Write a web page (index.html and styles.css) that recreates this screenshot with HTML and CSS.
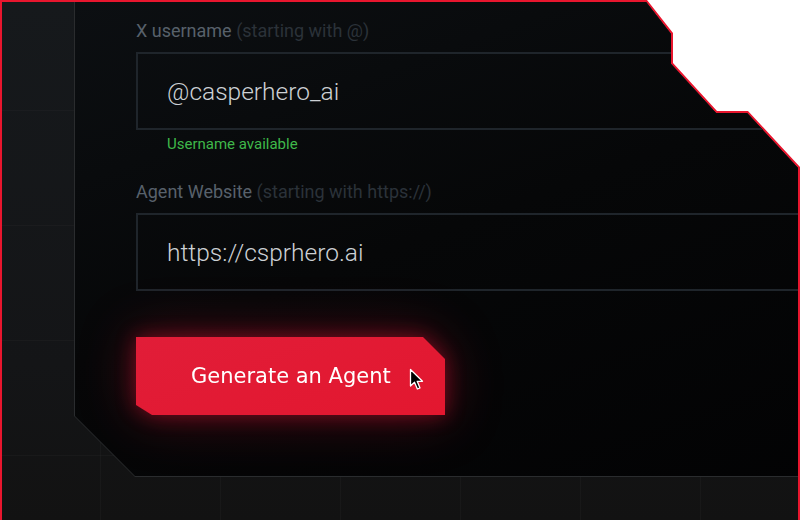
FILE: index.html
```html
<!DOCTYPE html>
<html lang="en">
<head>
    <meta charset="UTF-8">
    <meta name="viewport" content="width=device-width, initial-scale=1.0">
    <title>Create Agent</title>
    <link rel="stylesheet" href="styles.css">
</head>
<body>
    <div class="screen">
        <!-- red outer frame with cut corner -->
        <div class="frame">
            <div class="frame-inner">
                <div class="panel">
                    <div class="panel-body">
                        <!-- X username -->
                        <div class="field">
                            <label class="label">X username <span class="hint">(starting with @)</span></label>
                            <div class="input">@casperhero_ai</div>
                            <div class="status ok">Username available</div>
                        </div>

                        <!-- Website -->
                        <div class="field">
                            <label class="label">Agent Website <span class="hint">(starting with https://)</span></label>
                            <div class="input">https://csprhero.ai</div>
                        </div>

                        <div class="btn-wrap">
                            <button class="generate-btn">
                                Generate an Agent
                                <svg class="cursor" width="15" height="23" viewBox="0 0 15 23">
                                    <path d="M1.5 1.5 L1.5 18 L5.5 14.2 L8.4 21 L11 19.9 L8.2 13.3 L13.5 13.3 Z" fill="#000" stroke="#fff" stroke-width="1.3" stroke-linejoin="round"/>
                                </svg>
                            </button>
                        </div>
                    </div>
                </div>
            </div>
        </div>
    </div>
</body>
</html>
```

FILE: styles.css
```css
* {
    margin: 0;
    padding: 0;
    box-sizing: border-box;
}

body {
    background: #fff;
    font-family: Roboto, "Liberation Sans", Arial, sans-serif;
}

.screen {
    width: 800px;
    height: 520px;
    overflow: hidden;
}

/* outer frame */
.frame {
    width: 800px;
    height: 520px;
    background: #e8162e;
    clip-path: polygon(0 0, 647px 0, 673px 33px, 673px 63px, 717px 111px, 748px 111px, 800px 167px, 800px 100%, 0 100%);
    padding: 2px 0 0 2px;
}

.frame-inner {
    width: 796px;
    height: 518px;
    clip-path: polygon(0 0, 644px 0, 669px 32px, 669px 62px, 714px 111px, 745px 111px, 796px 166px, 796px 100%, 0 100%);
    background-color: #15171a;
    background-image:
        linear-gradient(rgba(255,255,255,0.025) 1px, transparent 1px),
        linear-gradient(90deg, rgba(255,255,255,0.025) 1px, transparent 1px),
        linear-gradient(180deg, #16191c 0%, #141517 70%, #121212 100%);
    background-size: 120px 115px, 120px 120px, 100% 100%;
    background-position: 0 -7px, -22px 0, 0 0;
    padding-left: 72px;
    overflow: hidden;
}

/* inner panel with chamfered bottom-left */
.panel {
    width: 900px;
    height: 475px;
    background: #2a2c2e;
    padding: 0 0 1px 1px;
    clip-path: polygon(0 0, 100% 0, 100% 100%, 61px 100%, 0 calc(100% - 61px));
}

.panel-body {
    height: 100%;
    background: linear-gradient(160deg, #0c0f12 0%, #060708 45%, #020203 100%);
    clip-path: polygon(0 0, 100% 0, 100% 100%, 60px 100%, 0 calc(100% - 60px));
    padding: 18px 0 0 61px;
}

.field {
    margin-bottom: 27px;
}

.label {
    display: block;
    font-size: 18px;
    line-height: 22px;
    color: #58616b;
    margin-bottom: 10px;
}

.hint {
    color: #2b3239;
}

.input {
    width: 760px;
    height: 78px;
    border: 2px solid #1f252b;
    padding-left: 29px;
    display: flex;
    align-items: center;
    font-size: 24.5px;
    font-weight: 300;
    color: #cdd1d5;
}

.status {
    font-size: 15px;
    line-height: 20px;
    padding-left: 31px;
    margin-top: 4px;
}

.status.ok {
    color: #3fb84a;
}

/* glow button */
.btn-wrap {
    margin-top: 46px;
    width: 309px;
    filter: drop-shadow(0 0 10px rgba(225, 20, 50, 0.45)) drop-shadow(0 0 26px rgba(170, 15, 40, 0.4));
}

.generate-btn {
    position: relative;
    width: 309px;
    height: 78px;
    border: none;
    background: linear-gradient(160deg, #e11d38 0%, #e3172f 100%);
    clip-path: polygon(0 0, 287px 0, 100% 22px, 100% 100%, 16px 100%, 0 68px);
    color: #fff;
    font-family: "DejaVu Sans", Verdana, sans-serif;
    font-size: 21px;
    text-align: left;
    padding-left: 55px;
    cursor: pointer;
}

.cursor {
    position: absolute;
    left: 273px;
    top: 31px;
}
```
